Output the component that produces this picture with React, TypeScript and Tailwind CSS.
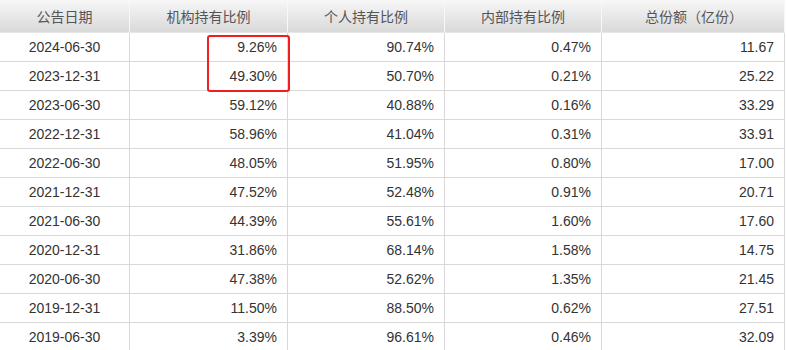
import React from "react";

const rows: [string, string, string, string, string][] = [
  ["2024-06-30", "9.26%", "90.74%", "0.47%", "11.67"],
  ["2023-12-31", "49.30%", "50.70%", "0.21%", "25.22"],
  ["2023-06-30", "59.12%", "40.88%", "0.16%", "33.29"],
  ["2022-12-31", "58.96%", "41.04%", "0.31%", "33.91"],
  ["2022-06-30", "48.05%", "51.95%", "0.80%", "17.00"],
  ["2021-12-31", "47.52%", "52.48%", "0.91%", "20.71"],
  ["2021-06-30", "44.39%", "55.61%", "1.60%", "17.60"],
  ["2020-12-31", "31.86%", "68.14%", "1.58%", "14.75"],
  ["2020-06-30", "47.38%", "52.62%", "1.35%", "21.45"],
  ["2019-12-31", "11.50%", "88.50%", "0.62%", "27.51"],
  ["2019-06-30", "3.39%", "96.61%", "0.46%", "32.09"],
];

const headers = ["公告日期", "机构持有比例", "个人持有比例", "内部持有比例", "总份额（亿份）"];

export default function App() {
  return (
    <div className="relative w-[787px] h-[350px] overflow-hidden bg-white">
      <div
        className="grid grid-cols-[130px_158px_157px_157px_183px] w-[785px]"
        style={{ fontFamily: '"Liberation Sans", Arial, sans-serif' }}
      >
        {headers.map((h, i) => (
          <div
            key={h}
            className="h-[33px] flex items-center justify-center border-r border-r-[#f8f8f8] border-b border-b-[#e6e6e6] bg-gradient-to-b from-[#f7f7f7] to-[#d9d9d9] text-[14px] text-[#555]"
            style={{ fontFamily: '"Noto Sans CJK SC", "Liberation Sans", sans-serif' }}
          >
            <span className={i === 4 ? "pl-[2px]" : ""}>{h}</span>
          </div>
        ))}
        {rows.map((r) =>
          r.map((c, i) => (
            <div
              key={r[0] + i}
              className={
                "h-[29px] flex items-center border-r border-b border-[#d9d9d9] text-[14px] text-[#333] " +
                (i === 0 ? "justify-center" : "justify-end pr-[10px]")
              }
            >
              {c}
            </div>
          ))
        )}
      </div>
      <div className="absolute left-[207px] top-[35px] w-[83px] h-[57px] border-2 border-[#f01e1e] rounded-[3px]" />
    </div>
  );
}
